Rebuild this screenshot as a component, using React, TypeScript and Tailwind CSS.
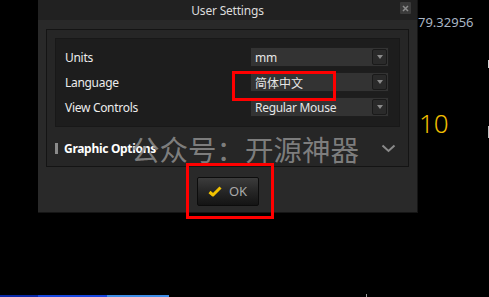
import React from "react";

const Dropdown = ({ value, cjk }: { value: string; cjk?: boolean }) => (
  <div className="w-[139px] h-[20px] bg-[#333333] border border-[#1e1e1e] flex items-center justify-between pl-[4px] pr-[1px]">
    <span
      className={`text-[12px] leading-none text-[#e6e6e6] pt-[1px] ${cjk ? "" : "tracking-[-0.3px]"}`}
      style={{ fontFamily: cjk ? '"Noto Sans CJK SC", sans-serif' : '"Noto Sans", sans-serif' }}
    >
      {value}
    </span>
    <div className="w-[15px] h-[16px] rounded-[2px] bg-[#2a2a2a] border border-[#1a1a1a] flex items-center justify-center">
      <svg width="6" height="4" viewBox="0 0 6 4">
        <path d="M0 0 L6 0 L3 4 Z" fill="#8a8a8a" />
      </svg>
    </div>
  </div>
);

export default function App() {
  return (
    <div
      className="relative w-[489px] h-[297px] bg-black overflow-hidden"
      style={{ fontFamily: '"Noto Sans", sans-serif' }}
    >
      <div className="flex h-full">
        {/* Dialog */}
        <div className="ml-[38px] w-[380px] h-[213px] bg-[#292929] border-r border-b border-[#151515] flex flex-col">
          <div className="relative h-[20px] bg-[#212121] flex items-center justify-center">
            <span className="text-[12px] tracking-[-0.2px] text-[#dcdcdc] leading-none pt-[1px]">User Settings</span>
            <div className="absolute right-[6px] top-[2px] w-[11px] h-[12px] bg-[#3a3a3a] rounded-[1px] flex items-center justify-center">
              <svg width="7" height="7" viewBox="0 0 7 7">
                <path d="M1 1 L6 6 M6 1 L1 6" stroke="#8c8c8c" strokeWidth="1.5" />
              </svg>
            </div>
          </div>
          <div className="px-[8px] pt-[9px]">
            <div className="h-[138px] border border-[#141414] bg-[#262626] flex flex-col">
              <div className="mx-[8px] mt-[8px] h-[89px] bg-[#1d1d1d] border border-[#181818] flex flex-col gap-[5px] pt-[8px] pl-[9px] pr-[10px]">
                {[
                  ["Units", "mm", false],
                  ["Language", "简体中文", true],
                  ["View Controls", "Regular Mouse", false],
                ].map(([label, val, cjk]) => (
                  <div key={label as string} className="flex items-center justify-between h-[20px]">
                    <span className="text-[12px] tracking-[-0.3px] text-[#ececec] leading-none pt-[2px]">{label as string}</span>
                    <Dropdown value={val as string} cjk={cjk as boolean} />
                  </div>
                ))}
              </div>
              <div className="flex-1 flex items-center pl-[8px] pr-[12px] pt-[3px]">
                <div className="w-[3px] h-[11px] bg-[#8a8a8a]" />
                <span className="ml-[6px] text-[12px] tracking-[-0.3px] font-bold text-white leading-none pt-[1px]">Graphic Options</span>
                <div className="flex-1" />
                <svg width="15" height="9" viewBox="0 0 15 9">
                  <path d="M1.5 1.5 L7.5 7 L13.5 1.5" stroke="#8a8a8a" strokeWidth="2" fill="none" />
                </svg>
              </div>
            </div>
          </div>
          <div className="flex justify-center pt-[10px]">
            <div className="w-[62px] h-[29px] rounded-[2px] border border-[#0c0c0c] bg-gradient-to-b from-[#3c3c3c] via-[#262626] to-[#141414] flex items-center justify-center gap-[7px]">
              <svg width="14" height="11" viewBox="0 0 14 11">
                <path d="M1.5 6 L5 9 L12.5 1.5" stroke="#f2c200" strokeWidth="3" fill="none" strokeLinejoin="round" />
              </svg>
              <span className="text-[13px] text-[#a9a9a9] leading-none">OK</span>
            </div>
          </div>
        </div>
        {/* Right side canvas */}
        <div className="relative flex-1">
          <span className="absolute left-0 top-[16px] text-[13px] leading-none text-[#a9b6c4]">79.32956</span>
          <span className="absolute left-[1px] top-[110px] text-[26px] leading-none font-light text-[#efbd00]">10</span>
          <div className="absolute right-0 top-[60px] w-[1px] h-[8px] bg-[#cfcfcf]" />
          <div className="absolute right-0 top-[126px] w-[1px] h-[12px] bg-[#bdbdbd]" />
        </div>
      </div>

      {/* Watermark */}
      <div
        className="absolute left-[131px] top-[135px] text-[28.5px] leading-none text-[#8e8e8e]/85 whitespace-nowrap pointer-events-none"
        style={{ fontFamily: '"Noto Sans CJK SC", sans-serif' }}
      >
        公众号：开源神器
      </div>

      {/* Red highlight boxes */}
      <div className="absolute left-[232px] top-[71px] w-[104px] h-[30px] border-[3px] border-[#ff0000]" />
      <div className="absolute left-[186px] top-[163px] w-[88px] h-[56px] border-[3px] border-[#ff0000]" />

      {/* Taskbar strip */}
      <div className="absolute left-0 bottom-0 h-[2px] flex">
        <div className="w-[38px] bg-[#0b2aa8]" />
        <div className="w-[69px] bg-[#1848e0]" />
        <div className="w-[62px] bg-[#3f8ee8]" />
      </div>
      <div className="absolute left-[366px] bottom-0 w-[1px] h-[3px] bg-[#9a9a9a]" />
    </div>
  );
}
